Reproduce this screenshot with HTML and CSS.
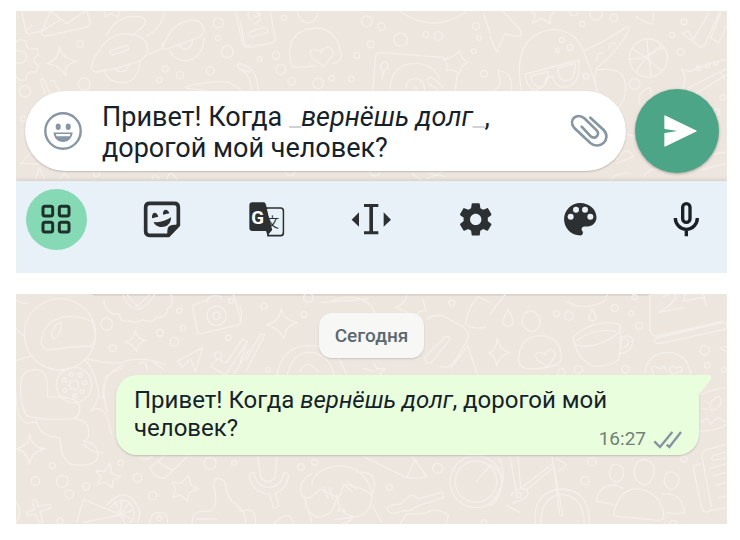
FILE: index.html
```html
<!DOCTYPE html>
<html lang="ru">
<head>
    <meta charset="UTF-8">
    <meta name="viewport" content="width=device-width, initial-scale=1.0">
    <title>Чат</title>
    <link rel="stylesheet" href="styles.css">
</head>
<body>
    <section class="panel">
        <div class="chat">
            <svg class="doodles" viewBox="48 33 2133 510" preserveAspectRatio="xMidYMid slice" aria-hidden="true">
                <!-- envelope, gear, car -->
                <path d="M65 33l12 60q2 10 12 8l40-8M152 33l-28 62q0 14 14 13l120-26q14-4 12-16l-10-33M152 33l48 38 58-38M124 95l60-38M77 93l20-18"/>
                <path d="M48 125l12-6 18 4 2 18 14 8 16-4 6 20-14 8v14l14 10-8 20-16-2-12 8-2 16-18 2-12-10M48 152q30-2 32 18t-32 20"/>
                <path d="M178 138q6 38 52 46-40 6-32 44-18-32-56-38 34-10 36-52z"/>
                <path d="M275 206q-4-16 22-54 34-56 84-50 56 0 62 44 0 26-28 38-56 22-128 32-10 0-12-10zM318 106q40-70 108-54 22 8 0 30l-28 24M440 108q44-22 54-75M332 152l44-14q14 0 8 12l-42 14q-16 2-10-12zM312 210q14 42 64 38 38-8 44-62M344 204q10 14 26 10 14-4 16-22M444 164l44-20q20-60 58-76 52-20 64 14 8 24-24 34l-88 32q-16 0-10-18M510 152q12 30 50 30 50-8 52-70M538 136q8 14 24 10 18-8 14-30"/>
                <path d="M120 240l10-4 20 44M122 244l14 36M152 244l8-4 22 40M555 262q70-22 130-16l40 24M560 266l60 6M748 204q-30-16-36-10-4 12 38 22M706 33l22 100q4 10 14 6l10-4"/>
                <path d="M62 490l46-50M62 490l54 2M106 538l12-34 16 34M180 538l12-20 14 18M456 538q8-22 22 0M500 538q10-34 30 0M312 33l4 18 16-10 22 10 4-18"/>
                <circle cx="240" cy="132" r="10"/><circle cx="253" cy="252" r="18"/><circle cx="75" cy="274" r="17"/><circle cx="496" cy="207" r="9"/><circle cx="478" cy="240" r="8"/><circle cx="540" cy="225" r="11"/><circle cx="631" cy="212" r="12"/><circle cx="655" cy="69" r="15"/><circle cx="654" cy="114" r="8"/><circle cx="682" cy="155" r="18"/><circle cx="290" cy="520" r="10"/><circle cx="70" cy="356" r="8"/>
                <!-- cassette, cap, turntable -->
                <g transform="translate(720 0)">
                    <path d="M0 60l14 72q4 12 16 10l68-14q10-4 8-14L90 33M32 94l42-12q12 2 8 16l-46 12q-14 0-4-16zM36 62q-18-12-8-26M42 46q4 10 14 0 0-10-10-10M60 38q6 26-18 34M170 33q10 36 38 36 22-4 28-36M0 190q54 14 54 82M0 208q34 16 34 64"/>
                    <path d="M152 188q-18-98 76-104 66 4 76 82-2 20-24 24M152 188q4 16 20 14l56-4M252 200l-36-28q-14-20 6-24 14 0 20 10 8-18 26-16 16 6 10 24z"/>
                    <path d="M398 272l8-100q2-14 16-14l188 14M652 220l-6 52M450 266q6-76 76-76 54 2 72 44M498 264q2-28 28-28t28 34M562 240q4-16 22-2l24 24M596 270l-30-20M660 152q2 24 24 36-22 6-26 34-16-18-38-10 6-20-10-36 24 2 50-24zM424 240l10-30 12-10-8-14h-10l-8 14 8 12-2 24zM482 36q100 66 196 0M730 38l20 60"/>
                    <path d="M516 520l28 20M566 518l50 12M560 536l50-22"/>
                    <circle cx="132" cy="54" r="8"/><circle cx="380" cy="64" r="16"/><circle cx="424" cy="80" r="11"/><circle cx="482" cy="119" r="20"/><circle cx="392" cy="133" r="10"/><circle cx="350" cy="166" r="9"/><circle cx="108" cy="166" r="11"/><circle cx="59" cy="177" r="7"/><circle cx="122" cy="208" r="15"/><circle cx="155" cy="244" r="11"/><circle cx="235" cy="250" r="16"/><circle cx="275" cy="235" r="8"/><circle cx="334" cy="237" r="8"/><circle cx="558" cy="103" r="9"/><circle cx="595" cy="108" r="13"/><circle cx="708" cy="78" r="11"/><circle cx="717" cy="114" r="7"/><circle cx="701" cy="154" r="7"/><circle cx="732" cy="221" r="10"/><circle cx="526" cy="264" r="4"/><circle cx="150" cy="512" r="15"/><circle cx="405" cy="512" r="16"/>
                </g>
                <!-- face in glasses, ball, shoe -->
                <g transform="translate(1470 0)">
                    <path d="M0 110l20 46 24-54 42 8q12-6 6-20l-54-57M122 33l14 10-8 26 28-14 24 16 2-28 14-10M94 272q-30-168 94-184 70 2 92 66 32 76 44 124M106 222l160-42q8 78-44 82-28-2-34-32-14-2-20 6-2 30-32 34-28-6-30-48zM122 228l52-14M204 204l52-14M204 204q0 42 28 38 24-6 24-50M122 228q8 38 32 32 22-8 20-46"/>
                    <path d="M282 152q50-20 130-72 10 0 4 14-40 66-96 110-10 30 2 70M356 146q2-22 20-16M322 210q92-14 84 62 0 30-20 50M320 182q-2-28 20-22M438 50q30 20 48 22 6-18 4-39"/>
                    <circle cx="475" cy="174" r="57"/>
                    <path d="M426 146q54 32 88 68M438 216q40-70 84-72M470 118l14 112M418 178q70-4 94-42"/>
                    <path d="M576 100l20-8 14 26 50-85M576 100l54 42 14-8 46-100M662 114l30-74M662 114l24 14 24-50M574 208l26 6q70-30 110-36M574 208q20 30 4 54l16 26M594 264l116-58M606 288l104-64M690 216l14 22M24 212q48 4 40 60M24 212q16 50-14 60M450 316q-14-40 30-54 10 40-10 60M440 410l-34-8"/>
                    <path d="M380 480q30-50 50-10l-50 20M360 540q20-24 60-20M460 530q30-40 60-10M620 470l90-14M630 510l80-20"/>
                    <circle cx="216" cy="120" r="8"/><circle cx="240" cy="143" r="9"/><circle cx="202" cy="151" r="6"/><circle cx="277" cy="72" r="8"/><circle cx="318" cy="43" r="18"/><circle cx="372" cy="53" r="11"/><circle cx="582" cy="66" r="9"/><circle cx="546" cy="105" r="8"/><circle cx="572" cy="156" r="10"/><circle cx="434" cy="252" r="16"/><circle cx="288" cy="229" r="8"/><circle cx="698" cy="292" r="8"/><circle cx="626" cy="205" r="7"/><circle cx="652" cy="197" r="6"/><circle cx="678" cy="190" r="6"/><circle cx="252" cy="33" r="14"/><circle cx="680" cy="336" r="9"/>
                </g>
            </svg>
            <div class="composer">
                <div class="input-pill">
                    <button class="icon-button" aria-label="Эмодзи">
                        <svg width="38" height="38" viewBox="0 0 38 38">
                            <circle cx="19" cy="19" r="17.7" fill="none" stroke="#8696a3" stroke-width="2.4"/>
                            <ellipse cx="14.2" cy="14.8" rx="2.5" ry="3.3" fill="#8696a3"/>
                            <ellipse cx="24.2" cy="14.8" rx="2.5" ry="3.3" fill="#8696a3"/>
                            <path d="M9.5 20.5h19.2C28 26 24.500 30 19 30S10 26 9.500 20.500z" fill="#8696a3"/>
                            <path d="M11.800 22h14.600l-.6 2.300H12.500z" fill="#fff"/>
                        </svg>
                    </button>
                    <div class="message-input" role="textbox" aria-multiline="true" aria-label="Сообщение" contenteditable="true" spellcheck="false">Привет! Когда <span class="mark">_</span><em>вернёшь долг</em><span class="mark">_</span>, дорогой мой человек?</div>
                    <button class="icon-button" aria-label="Прикрепить">
                        <svg width="40" height="36" viewBox="236 340 120 108">
                            <path d="M300 354l40 37c25 28-12 62-40 39l-48-45c-20-24 8-48 30-29l37 36c12 14-6 29-19 17l-26-28" fill="none" stroke="#8696a3" stroke-width="8" stroke-linecap="round"/>
                        </svg>
                    </button>
                </div>
                <button class="send-button" aria-label="Отправить">
                    <svg width="84" height="84" viewBox="436 268 252 252">
                        <path d="M526 349l93 45-93 45v-37l52-8-52-8z" fill="#fff" stroke="#fff" stroke-width="4" stroke-linejoin="round"/>
                    </svg>
                </button>
            </div>
        </div>
        <div class="keyboard-bar">
            <button class="tool active" aria-label="Меню">
                <svg viewBox="78 57 183 183">
                    <g fill="none" stroke="#1d3029" stroke-width="9">
                        <rect x="129" y="109" width="29" height="29" rx="6"/><rect x="178" y="109" width="29" height="29" rx="6"/>
                        <rect x="129" y="157" width="29" height="29" rx="6"/><rect x="178" y="157" width="29" height="29" rx="6"/>
                    </g>
                </svg>
            </button>
            <button class="tool" aria-label="Стикеры">
                <svg viewBox="393 57 183 183">
                    <path d="M449 100h74q12 0 12 12v53l-30 31h-56q-12 0-12-12v-72q0-12 12-12z" fill="none" stroke="#2d3033" stroke-width="11"/>
                    <path d="M538 164h-16q-20 0-20 18v18h6l30-31z"/>
                    <path d="M456 145c-2-20 14-22 19-5zM489 134c-2-18 15-20 19-4zM461 156q28 3 52-14c2 34-44 38-52 14z"/>
                </svg>
            </button>
            <button class="tool" aria-label="Переводчик">
                <svg viewBox="-12 57 183 183">
                    <path d="M80 114h42q8 0 8 8v67q0 8-8 8H84z" fill="none" stroke="#2d3033" stroke-width="5"/>
                    <path d="M37 97h34q5 0 7 7l19 76-14 17-5-14H37q-9 0-9-9v-68q0-9 9-9z"/>
                    <path d="M82 122l15 58-10 12h33q7 0 7-7v-61q0-7-7-7H81z" fill="#e8f1f7"/>
                    <text class="glyph-latin" x="34" y="161">G</text>
                    <text class="glyph-cjk" x="77" y="172">文</text>
                </svg>
            </button>
            <button class="tool" aria-label="Курсор">
                <svg viewBox="303 57 183 183">
                    <path d="M372 102h43v9h-16v73h16v9h-43v-9h16v-73h-16zM335 149l22-22v43zM453 149l-22-22v43z"/>
                </svg>
            </button>
            <button class="tool" aria-label="Настройки">
                <svg viewBox="618 57 183 183">
                    <path transform="translate(649 90) scale(4.850)" d="M19.430 12.980c.04-.32.07-.64.07-.98s-.03-.66-.07-.98l2.110-1.650c.19-.15.24-.42.12-.64l-2-3.460c-.12-.22-.39-.3-.61-.22l-2.490 1c-.52-.4-1.080-.73-1.690-.98l-.38-2.650C14.460 2.180 14.250 2 14 2h-4c-.25 0-.46.18-.49.42l-.38 2.650c-.61.25-1.170.59-1.690.98l-2.490-1c-.23-.09-.49 0-.61.22l-2 3.460c-.13.22-.07.49.12.64l2.110 1.650c-.04.32-.07.65-.07.98s.03.66.07.98l-2.110 1.650c-.19.15-.24.42-.12.64l2 3.460c.12.22.39.3.61.22l2.490-1c.52.4 1.080.73 1.690.98l.38 2.650c.03.24.24.42.49.42h4c.25 0 .46-.18.49-.42l.38-2.650c.61-.25 1.170-.59 1.690-.98l2.490 1c.23.09.49 0 .61-.22l2-3.460c.12-.22.07-.49-.12-.64l-2.110-1.650zM12 15.500c-1.930 0-3.500-1.570-3.500-3.500s1.570-3.500 3.500-3.500 3.500 1.570 3.500 3.500-1.570 3.500-3.500 3.500z"/>
                </svg>
            </button>
            <button class="tool" aria-label="Тема">
                <svg viewBox="183 57 183 183">
                    <path transform="translate(206 83) scale(5.400)" d="M12 3c-4.970 0-9 4.030-9 9s4.030 9 9 9c.83 0 1.500-.67 1.500-1.500 0-.39-.15-.74-.39-1.010-.23-.26-.38-.61-.38-.99 0-.83.67-1.500 1.500-1.500H16c2.760 0 5-2.240 5-5 0-4.420-4.030-8-9-8z"/>
                    <g fill="#e8f1f7"><circle cx="242" cy="140" r="9"/><circle cx="258" cy="119" r="9"/><circle cx="285" cy="119" r="9"/><circle cx="301" cy="140" r="9"/></g>
                </svg>
            </button>
            <button class="tool" aria-label="Голосовой ввод">
                <svg viewBox="498 57 183 183">
                    <g fill="none" stroke="#1a2126" stroke-width="10">
                        <rect x="578" y="101" width="22" height="56" rx="11"/>
                        <path d="M556 144a33 34 0 0 0 66 0M589 178v21"/>
                    </g>
                </svg>
            </button>
        </div>
    </section>

    <section class="panel history">
        <svg class="doodles" viewBox="48 27 2133 690" preserveAspectRatio="xMidYMid slice" aria-hidden="true">
            <path class="previous" d="M270 27h1685l-12 5H285z"/>
            <!-- astronaut, camera, stars -->
            <circle cx="180" cy="148" r="107"/>
            <path d="M276 110q-68-32-120 0-34 26-32 66 6 24 44 16 54-10 106-8 22-30 2-74zM154 148q8-34 28-34 8 10-10 40-14 16-18-6zM48 130l22 22M48 226l52-14M48 46q20 10 36 10M92 256q-34 4-30 64 0 34 16 72 50 16 140 8 26-4 20-40-8-22-60-24l-36-2q4-66-20-76-16-8-30-2zM48 320q0 80 30 94l30-2M108 400q6 54 72 58 2 68 36 80 70 10 78-24 4-36-44-46 20-4 16-34-4-30-44-32M254 222q40 50 42 110-8 36-26 46 50-30 64 70M262 222q60 14 100 12 60-26 136 6M322 270q-20 50 0 110M250 478q30 30 60 24"/>
            <circle cx="222" cy="300" r="53"/><circle cx="222" cy="300" r="14"/>
            <path d="M312 46q4 44 46 42 4 26 30 20 20 10 40-4 30 14 38-6 36 0 36-26 24-14 10-46M370 30q4 30 42 44 40-16 52-46M382 30l30 34 36-34M310 340q-10-70 60-100M336 262l30-12M418 234q20-10 24 18M460 232l30 20"/>
            <path d="M578 68l14 70q4 10 14 8l108-26q12-6 8-18l-22-75M578 68q0-10 12-12l32-10M622 50q0-20 30-17 14 0 12 10M406 138q6 24 30 28-24 8-26 32-10-22-34-26 24-8 30-34zM532 228l76-40-22 72-14-38-26 24zM632 244l44 26 66-100-14-8-50 72-26-12zM700 270l48-76"/>
            <circle cx="650" cy="92" r="29"/><circle cx="650" cy="92" r="11"/>
            <path d="M90 446q4 44 46 46-42 6-48 46-6-40-40-46 38-8 42-46zM330 534l6 32 26 8-24 14-2 20-20-18-24 10 10-24-14-18 26 2zM566 570l6 30 24 10-28 12-6 26-20-18-24 8 8-28-10-18 28 2zM106 642l8 22 34-6q8 4 0 12l-28 10 8 28q-4 8-14-2l-8-18-24 4q-6-8 4-12l18-8-8-24z"/>
            <path d="M450 548l44-36M450 548q10 30 44 32l70-68M476 530q20 20 44 24M230 712l20-68 112 44M250 712l110-22M320 660q54-60 92 0 14 30 0 52M330 668q40-40 64-8 20 40-6 52M362 688l-20-40M362 688l2-44M362 688l24-32M362 688l34-12M362 688l34 14M362 688l14 28M576 716q0-46 50-36 34-10 14-84 10-30 36-4 0 46 36 70 24 20 26 54M590 702h60M450 716q0-34 28-34t24 34M48 650q22 34 0 62M420 516q10 16 38-2"/>
            <circle cx="193" cy="285" r="6"/><circle cx="214" cy="268" r="6"/><circle cx="240" cy="270" r="6"/><circle cx="254" cy="293" r="6"/><circle cx="195" cy="316" r="6"/><circle cx="224" cy="332" r="6"/><circle cx="246" cy="320" r="6"/><circle cx="320" cy="117" r="18"/><circle cx="338" cy="190" r="10"/><circle cx="480" cy="143" r="10"/><circle cx="538" cy="77" r="8"/><circle cx="549" cy="129" r="8"/><circle cx="523" cy="170" r="13"/><circle cx="654" cy="212" r="11"/><circle cx="685" cy="158" r="8"/><circle cx="693" cy="48" r="7"/><circle cx="157" cy="542" r="9"/><circle cx="106" cy="588" r="13"/><circle cx="187" cy="589" r="18"/><circle cx="208" cy="628" r="13"/><circle cx="258" cy="604" r="11"/><circle cx="362" cy="534" r="8"/><circle cx="412" cy="578" r="13"/><circle cx="458" cy="632" r="12"/><circle cx="630" cy="535" r="18"/><circle cx="703" cy="534" r="8"/><circle cx="180" cy="708" r="9"/><circle cx="478" cy="700" r="7"/>
            <!-- disc, bag, microphone, grandma, pencil -->
            <g transform="translate(720 0)">
                <path d="M124 70q6 36 48 42-36 10-40 50-14-34-52-42 38-10 44-50zM0 110q10-20 0-44M0 236l22-70M18 258l56-108-12-4-44 80M110 270q20-92 100-88 80 0 110 88M142 270q16-70 68-68 56 2 72 68M178 262q20-46 58 0M270 50q60-24 94-6 40 16 40 46M244 52l140-10M466 66q24-2 34-33M466 66l40 18 10 8q18 0 22-14l20-2-10-34M560 102q30-20 60-4l50 28q20 14 12 40l-40 66q-12 20-40 12M552 218l66-64q14 0 10 12l-54 66q-16 8-22-14zM682 180l30 88M632 250l50-66M676 116q14-60 38-82l40 20M676 116q24 20 62 10M404 236l6 16 26-2-18 20M370 250l28 8"/>
                <path d="M28 574q2-14 14-10 6 40 46 44 34-2 44-44 10-2 14 6-4 42-40 54l10 36q-6 14-16 8l-10-40q-54-6-62-54zM54 516l8 60q20 28 44 0l4-60M216 600q0-50 90-58 70 10 88 76M216 566q-40 20-34 58 10 10 16 18M350 562q50-6 54 30 0 30-12 38M196 640q20 0 44-28l56 28 16-42 50 12 34 18q0 60-50 68-50-4-56-66-6 66-56 66-40-10-38-56zM250 606l14 34M268 608l10 36M310 596l26 24M322 590l26 22M284 704l56-8q-14 20-34 20M216 716l-10-40M396 660l28 50"/>
                <path d="M374 516l126 62q40 4 62-4l-46-60M500 578l26-54 32 50M440 670q14-14 40-12l30-26q20-2 24 10l70-20q10 4 6 16l-80 26q-20 18-40 12-40 20-50-6zM480 716l20-28 60-4q20-20 66 6l-8 26M0 680q50-20 46 34M100 716q50-50 60 0"/>
                <circle cx="708" cy="590" r="78"/><circle cx="708" cy="590" r="62"/><path d="M708 590l44-50"/>
                <circle cx="72" cy="62" r="9"/><circle cx="205" cy="38" r="14"/><circle cx="192" cy="89" r="9"/><circle cx="84" cy="254" r="7"/><circle cx="635" cy="54" r="9"/><circle cx="183" cy="546" r="10"/><circle cx="224" cy="532" r="9"/><circle cx="448" cy="607" r="9"/><circle cx="593" cy="550" r="15"/><circle cx="732" cy="712" r="8"/><circle cx="296" cy="676" r="3"/><circle cx="312" cy="676" r="3"/>
            </g>
            <!-- cup, calendar, bicycle, people, newspaper -->
            <g transform="translate(1470 0)">
                <path d="M54 74q16 24 16 38-4 12-16 12-18-4-16-18zM96 110q0-30 28-32 28 6 26 38-6 22-26 24-26-8-28-30zM306 72q14 18 12 28-10 14-22 0zM22 160q6 34 36 44-30 4-38 40-6-34-24-40 24-8 26-44zM86 226q0-72 66-74 54 4 62 56 2 26-16 32-40 14-92 10-18-4-20-24zM172 246l-30-22q-14-18 4-22 14 0 18 8 6-16 20-16 16 4 10 22zM0 86l46-58M232 50q44 30 110 0l10-20"/>
                <path d="M250 156q56-52 132-40 14 8 6 26-60 50-124 40-18-10-14-26zM262 166q50-38 116-28M250 160q10 60 60 84 60 0 78-24l4-78M388 158q40-14 40 12-4 34-42 36M392 166q18-12 24 4-2 18-22 20zM480 27v110q4 18 24 16l192-44M496 160l204-48q14 2 8 20l-200 44q-20-2-12-16zM520 36q40-24 36 0-4 20-48 46l74-14M586 28l-6 20 66-12M640 27l8 36M464 264q10-60 68-62 60 2 70 64M490 268q-14-26 6-24l14 8q14-18 18 6M546 268q-16-24 4-24l12 6q14-14 14 8z"/>
                <path d="M627 330q50-20 84-22M660 370q0-30 28-36 14 16-6 34-18 14-22 2zM632 410l20-10 10 18 20-20 28 12M630 438q50 0 80-20M645 346l8 8M640 370l12 4"/>
                <path d="M0 540q50 20 30 80-10 36-30 42M24 516q40 70-24 140M60 516l18 98M84 516l8 94 96-74M108 616l84-70 16 140q6 16 10 0l-32-170M64 632q10-24 40-20 24 14-8 32l-28 10M48 660l40 22M206 560l24-20-30-20"/>
                <circle cx="86" cy="630" r="8"/>
                <path d="M136 716q-10-98 80-104 84 4 82 104M152 716q0-80 64-88 68 8 66 88M318 648q10-50 60-48l20 10M318 648l50 10M372 684q14-74 74-72 70 10 76 86-4 8-14 8l-124-12q-14 0-12-10zM516 628q58-10 68 54-20 8-54 0M358 564q4-28 22-26 26 6 20 34-10 20-22 20-20-10-20-28zM432 560q4-38 34-36 32 10 26 42-10 34-32 34-24-10-28-40zM522 586q2-24 22-26 28 8 22 32-8 20-22 22-20-8-22-28z"/>
                <path d="M710 478l-60 16q-16 4-14 20l28 150M636 536l-20 4q-8 8-4 20l24 112q10 16 28 4l46-8M710 500l-40 12q-10 12 2 14l38-8M710 536l-50 14M710 562l-40 10M710 592l-30 8M710 632l-24 6M690 190q10-8 22-4M690 190l20 10"/>
                <circle cx="200" cy="86" r="9"/><circle cx="237" cy="93" r="13"/><circle cx="374" cy="69" r="10"/><circle cx="423" cy="85" r="7"/><circle cx="447" cy="123" r="10"/><circle cx="265" cy="254" r="12"/><circle cx="214" cy="262" r="11"/><circle cx="406" cy="253" r="11"/><circle cx="644" cy="196" r="14"/><circle cx="652" cy="241" r="8"/><circle cx="701" cy="255" r="7"/><circle cx="306" cy="530" r="12"/><circle cx="285" cy="587" r="12"/><circle cx="582" cy="522" r="9"/><circle cx="434" cy="37" r="8"/><circle cx="550" cy="716" r="10"/>
            </g>
        </svg>
        <div class="date">Сегодня</div>
        <div class="bubble">
            <p class="bubble-text">Привет! Когда <em>вернёшь долг</em>, дорогой мой человек?</p>
            <div class="meta">
                <time>16:27</time>
                <svg width="29" height="19" viewBox="490 429 87 57" aria-hidden="true">
                    <path d="M494 463l17 17 37-45M531 473l8 7 35-45" fill="none" stroke="#8593a0" stroke-width="7"/>
                </svg>
            </div>
            <svg class="tail" width="14" height="22" viewBox="0 0 14 22" aria-hidden="true">
                <path d="M0 0h10q3 1 2 4Q9 9 0 19z" fill="#e9fedd"/>
            </svg>
        </div>
    </section>
</body>
</html>
```
FILE: styles.css
```css
body {
    display: flex;
    flex-direction: column;
    gap: 21px;
    margin: 0;
    padding: 11px 13px 16px 16px;
    background-color: #fff;
    font-family: Roboto, sans-serif;
    color: #16222a;
}

button {
    display: flex;
    padding: 0;
    border: none;
    background: transparent;
    cursor: pointer;
}

.panel {
    position: relative;
    background-color: #ede6df;
    overflow: hidden;
}

.chat {
    position: relative;
    padding: 78px 8px 8px 9px;
}

.doodles {
    position: absolute;
    inset: 0;
    width: 100%;
    height: 100%;
    fill: none;
    stroke: #f4efe9;
    stroke-width: 4;
    stroke-linecap: round;
    stroke-linejoin: round;
}

.doodles .previous {
    fill: #d9d1ca;
    stroke: none;
}

/* message field */
.composer {
    position: relative;
    display: flex;
    align-items: center;
    gap: 9px;
}

.input-pill {
    display: flex;
    flex: 1;
    align-items: center;
    gap: 20px;
    min-height: 80px;
    padding: 0 17px 0 19px;
    border-radius: 40px;
    box-sizing: border-box;
    background-color: #fff;
    box-shadow: 0 1px 2px rgba(0, 0, 0, 0.2);
}

.icon-button {
    flex: none;
}

.message-input {
    flex: 1;
    padding-top: 3px;
    font-size: 27px;
    line-height: 31px;
    outline: none;
}

.mark {
    color: #cfd2d4;
}

.send-button {
    flex: none;
    border-radius: 50%;
    background-color: #4da587;
    box-shadow: 0 1px 3px rgba(0, 0, 0, 0.3);
}

/* keyboard tools */
.keyboard-bar {
    position: relative;
    display: flex;
    justify-content: space-between;
    padding: 8px 10px 23px;
    background-color: #e8f1f7;
    box-shadow: 0 -1px 4px rgba(0, 0, 0, 0.12);
}

.tool {
    width: 61px;
    height: 61px;
    border-radius: 50%;
}

.tool svg {
    width: 100%;
    height: 100%;
    fill: #2d3033;
}

.tool.active {
    background-color: #86d9b5;
}

.glyph-latin {
    font: bold 56px Roboto, sans-serif;
    fill: #fff;
}

.glyph-cjk {
    font: 40px "Noto Sans CJK JP", sans-serif;
}

/* sent message */
.history {
    display: flex;
    flex-direction: column;
    align-items: center;
    gap: 17px;
    padding: 19px 28px 69px 100px;
}

.date {
    position: relative;
    margin-left: -72px;
    padding: 0 16px;
    border-radius: 13px;
    background-color: #f7f7f6;
    box-shadow: 0 1px 2px rgba(0, 0, 0, 0.15);
    color: #5b6871;
    font-size: 19px;
    font-weight: 500;
    line-height: 45px;
}

.bubble {
    position: relative;
    display: grid;
    width: 100%;
    padding: 11px 17px 4px 18px;
    border-radius: 21px 0 21px 21px;
    box-sizing: border-box;
    background-color: #e9fedd;
    box-shadow: 0 1px 2px rgba(0, 0, 0, 0.18);
}

.bubble-text {
    grid-area: 1 / 1;
    margin: 0 0 9px;
    font-size: 24px;
    line-height: 28px;
}

.meta {
    display: flex;
    grid-area: 1 / 1;
    align-items: center;
    align-self: end;
    justify-self: end;
    gap: 7px;
    color: #728079;
    font-size: 19px;
    line-height: 24px;
}

.tail {
    position: absolute;
    top: 0;
    left: 100%;
}
```
